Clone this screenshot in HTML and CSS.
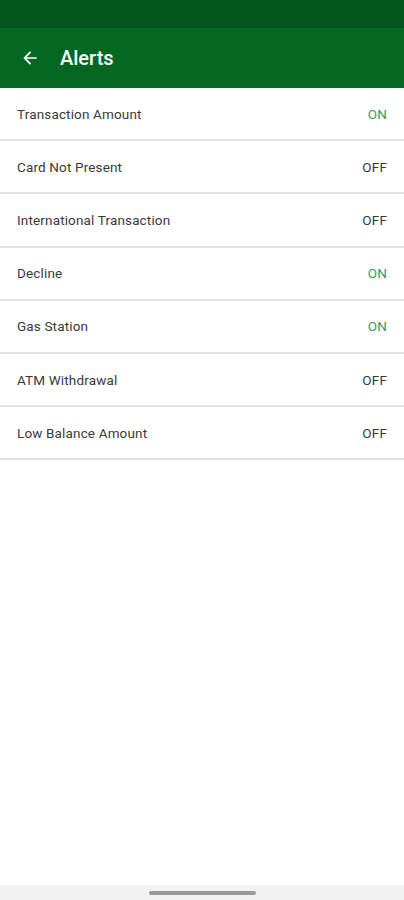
FILE: index.html
```html
<!DOCTYPE html>
<html lang="en">
<head>
    <meta charset="UTF-8">
    <meta name="viewport" content="width=device-width, initial-scale=1.0">
    <title>Alerts</title>
    <link rel="stylesheet" href="styles.css">
</head>
<body>
    <div class="status-bar"></div>
    <header class="toolbar">
        <button class="back" aria-label="Back">
            <svg width="20" height="20" viewBox="0 0 24 24"><path d="M20 11H7.83l5.59-5.59L12 4l-8 8 8 8 1.41-1.41L7.83 13H20v-2z" fill="#fff"/></svg>
        </button>
        <h1 class="title">Alerts</h1>
    </header>
    <ul class="alerts">
        <li class="alert"><span>Transaction Amount</span><span class="state on">ON</span></li>
        <li class="alert"><span>Card Not Present</span><span class="state">OFF</span></li>
        <li class="alert"><span>International Transaction</span><span class="state">OFF</span></li>
        <li class="alert"><span>Decline</span><span class="state on">ON</span></li>
        <li class="alert"><span>Gas Station</span><span class="state on">ON</span></li>
        <li class="alert"><span>ATM Withdrawal</span><span class="state">OFF</span></li>
        <li class="alert"><span>Low Balance Amount</span><span class="state">OFF</span></li>
    </ul>
    <div class="spacer"></div>
    <div class="nav-bar"><div class="handle"></div></div>
</body>
</html>
```

FILE: styles.css
```css
html, body {
    height: 100%;
}

body {
    margin: 0;
    display: flex;
    flex-direction: column;
    background: #fff;
    font-family: Roboto, "Liberation Sans", sans-serif;
}

.status-bar {
    height: 28px;
    background: #02561c;
}

.toolbar {
    height: 60px;
    display: flex;
    align-items: center;
    background: #036721;
}

.back {
    width: 60px;
    height: 100%;
    display: flex;
    align-items: center;
    justify-content: center;
    padding: 0;
    background: none;
    border: none;
}

.title {
    margin: 0;
    color: #fff;
    font-size: 20px;
    font-weight: 500;
}

.alerts {
    list-style: none;
    margin: 0;
    padding: 0;
}

.alert {
    height: 51.2px;
    display: flex;
    align-items: center;
    justify-content: space-between;
    padding: 0 17px;
    border-bottom: 2px solid #e2e2e2;
    color: #3a3a3a;
    font-size: 13.5px;
    letter-spacing: 0.15px;
}

.state {
    color: #3a3a3a;
}

.state.on {
    color: #2a9d6a;
}

.spacer {
    flex: 1;
}

.nav-bar {
    height: 15px;
    display: flex;
    align-items: center;
    justify-content: center;
    background: #f2f2f2;
}

.handle {
    width: 107px;
    height: 4px;
    border-radius: 2px;
    background: #9a9a9a;
}
```
